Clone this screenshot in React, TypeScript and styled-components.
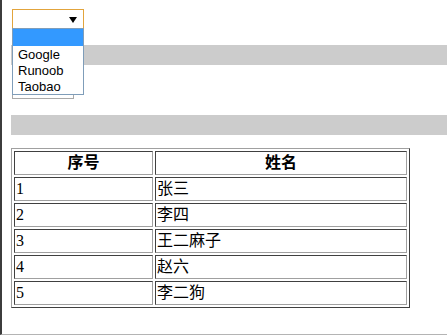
import React from 'react'
import styled, { createGlobalStyle } from 'styled-components'

const GlobalStyle = createGlobalStyle`
  html, body {
    margin: 0;
    padding: 0;
    background: #fff;
  }
`

const Frame = styled.div`
  box-sizing: border-box;
  min-height: 100vh;
  border-left: 2px solid #3c3c3c;
  border-bottom: 1px solid #b4b4b4;
  padding: 9px 0 0 9px;
  font-family: "Liberation Serif", "Noto Sans CJK SC", serif;
`

const SelectBox = styled.div<{ $width: number; $focused?: boolean }>`
  position: relative;
  box-sizing: border-box;
  width: ${(p) => p.$width}px;
  height: 20px;
  margin-left: 1px;
  border: 1px solid ${(p) => (p.$focused ? '#e2a43c' : '#a9a9a9')};
  background: #fff;
  display: flex;
  align-items: center;
  justify-content: flex-end;
  padding-right: 6px;
`

const Arrow = styled.span`
  width: 0;
  height: 0;
  margin-top: 1px;
  border-left: 4px solid transparent;
  border-right: 4px solid transparent;
  border-top: 6px solid #000;
`

const DropList = styled.ul`
  position: absolute;
  top: 100%;
  left: -1px;
  z-index: 2;
  box-sizing: border-box;
  width: 72px;
  margin: 0;
  padding: 0;
  list-style: none;
  background: #fff;
  border: 1px solid #7f9db9;
`

const Option = styled.li<{ $active?: boolean }>`
  height: ${(p) => (p.$active ? 17 : 16)}px;
  line-height: 17px;
  padding-left: 5px;
  font-family: "Liberation Sans", Arial, sans-serif;
  font-size: 13px;
  color: #000;
  background: ${(p) => (p.$active ? '#3399ff' : 'transparent')};
`

const Bar = styled.div<{ $gap: number }>`
  height: 20px;
  margin-top: ${(p) => p.$gap}px;
  background: #cccccc;
`

const SecondSelect = styled(SelectBox)`
  margin-top: 14px;
`

const Table = styled.table`
  margin-top: 13px;
  width: 399px;
  table-layout: fixed;
  border-collapse: separate;
  border-spacing: 2px;
  border: 1px solid;
  border-color: #a0a0a0 #404040 #404040 #a0a0a0;
  font-size: 16px;
`

const Cell = styled.td`
  box-sizing: border-box;
  height: 24px;
  padding: 1px;
  line-height: 20px;
  border: 1px solid;
  border-color: #404040 #a0a0a0 #a0a0a0 #404040;
  color: #000;
`

const HeadCell = styled(Cell).attrs({ as: 'th' })`
  font-weight: bold;
  text-align: center;
`

const sites = ['Google', 'Runoob', 'Taobao']

const people = [
  { id: 1, name: '张三' },
  { id: 2, name: '李四' },
  { id: 3, name: '王二麻子' },
  { id: 4, name: '赵六' },
  { id: 5, name: '李二狗' },
]

const App: React.FC = () => {
  return (
    <Frame>
      <GlobalStyle />
      <SelectBox $width={72} $focused>
        <Arrow />
        <DropList>
          <Option $active>&nbsp;</Option>
          {sites.map((s) => (
            <Option key={s}>{s}</Option>
          ))}
        </DropList>
      </SelectBox>
      <Bar $gap={16} />
      <SecondSelect $width={62}>
        <Arrow />
      </SecondSelect>
      <Bar $gap={16} />
      <Table>
        <colgroup>
          <col style={{ width: 139 }} />
          <col style={{ width: 252 }} />
        </colgroup>
        <thead>
          <tr>
            <HeadCell>序号</HeadCell>
            <HeadCell>姓名</HeadCell>
          </tr>
        </thead>
        <tbody>
          {people.map((p) => (
            <tr key={p.id}>
              <Cell>{p.id}</Cell>
              <Cell>{p.name}</Cell>
            </tr>
          ))}
        </tbody>
      </Table>
    </Frame>
  )
}

export default App
